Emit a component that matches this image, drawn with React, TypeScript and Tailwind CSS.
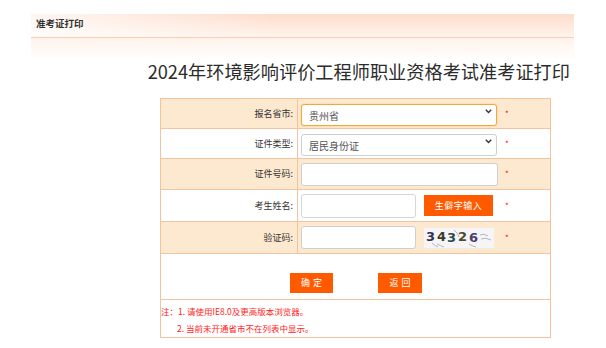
import type { ReactNode } from 'react';

// Row of the form: label on the left, controls and the red star on the right.
function Row({ label, shaded, h, children }: { label: string; shaded?: boolean; h: string; children: ReactNode }) {
  return (
    <div className={`grid grid-cols-[137px_1fr] border-b border-[#f3c3a0] ${h} ${shaded ? 'bg-[#fde8d0]' : 'bg-white'}`}>
      <div className="flex items-center justify-end pr-[4px] border-r border-[#f3c3a0] text-[9px] text-[#333]">
        {label}:
      </div>
      <div className="flex items-center pl-[3px]">
        <div className="flex items-center w-[204px]">{children}</div>
        <span className="text-[8px] leading-none text-[#ff0000]">*</span>
      </div>
    </div>
  );
}

function Select({ value, focused }: { value: string; focused?: boolean }) {
  return (
    <div className="relative">
      <select
        defaultValue={value}
        className={`appearance-none w-[196px] h-[22px] rounded-[3px] bg-white pl-[7px] text-[10px] text-[#555] outline-none border ${
          focused ? 'border-[#eeaa3a] shadow-[0_0_2px_#f7c97a]' : 'border-[#cfcfcf]'
        }`}
      >
        <option>{value}</option>
      </select>
      <svg className="pointer-events-none absolute right-[5px] top-[8px]" width="7" height="5" viewBox="0 0 7 5">
        <path d="M0.8 0.8 L3.5 3.6 L6.2 0.8" fill="none" stroke="#333" strokeWidth="1.4" />
      </svg>
    </div>
  );
}

function Captcha() {
  return (
    <svg width="70" height="20" viewBox="0 0 70 20" className="ml-[8px]">
      <rect width="70" height="20" fill="#f5f5f8" />
      <g fontFamily="'DejaVu Sans', sans-serif" fontWeight="bold" fontSize="13">
        <text x="2" y="13" fill="#34344e">3</text>
        <text x="13" y="13" fill="#3d3a1e">4</text>
        <text x="23" y="14" fill="#2f4b48">3</text>
        <text x="34" y="13" fill="#4d4a2c">2</text>
        <text x="45" y="14" fill="#4c3f6a">6</text>
      </g>
      <g fill="none" stroke="#9a9aa8" strokeWidth="0.7">
        <path d="M8 15 Q11 18 14 19" />
        <path d="M13 16 Q17 18 20 19" />
        <path d="M30 2 Q34 5 35 9" />
        <path d="M56 7 Q60 5 64 8" />
        <path d="M57 11 Q61 9 67 12" />
        <path d="M45 16 Q48 18 52 19" />
      </g>
    </svg>
  );
}

export default function App() {
  return (
    <div className="w-[606px] h-[348px] bg-white pt-[14px] font-[family-name:'Noto_Sans_CJK_SC','Noto_Sans',sans-serif] overflow-hidden">
      <div className="ml-[31px] w-[543px]">
        {/* Header band */}
        <div className="flex items-start h-[24px] border-b border-[#f6cfb6] bg-[linear-gradient(to_right,rgba(255,255,255,0.75),rgba(255,255,255,0)_45%),linear-gradient(to_bottom,#fddccb,#fff4ec)] pl-[5px] pt-[2px] text-[9.5px] font-bold leading-[14px] text-[#333]">
          准考证打印
        </div>
        <div className="bg-[linear-gradient(to_bottom,#fff2ea,#ffffff_22px)] pt-[20px] pr-[4px] text-right text-[18.2px] leading-[26px] text-[#2b2b2b]">
          2024年环境影响评价工程师职业资格考试准考证打印
        </div>
      </div>

      {/* Form table */}
      <div className="ml-[160px] mt-[14px] w-[391px] border border-[#f3c3a0] border-b-0">
        <Row label="报名省市" shaded h="h-[30px]">
          <Select value="贵州省" focused />
        </Row>
        <Row label="证件类型" h="h-[30px]">
          <Select value="居民身份证" />
        </Row>
        <Row label="证件号码" shaded h="h-[31px]">
          <input className="w-[197px] h-[23px] rounded-[3px] border border-[#cfcfcf] bg-white outline-none" />
        </Row>
        <Row label="考生姓名" h="h-[32px]">
          <input className="w-[115px] h-[24px] rounded-[3px] border border-[#d6d6d6] bg-white outline-none" />
          <button className="ml-[8px] w-[69px] h-[21px] bg-[#ff5a00] text-[9px] text-white tracking-[0.5px]">生僻字输入</button>
        </Row>
        <Row label="验证码" shaded h="h-[32px]">
          <input className="w-[115px] h-[23px] rounded-[3px] border border-[#cfcfcf] bg-white outline-none" />
          <Captcha />
        </Row>

        {/* Buttons */}
        <div className="h-[46px] border-b border-[#f3c3a0] flex items-start gap-[45px] pl-[129px] pt-[19px]">
          <button className="w-[43px] h-[20px] bg-[#ff5a00] text-[9px] text-white tracking-[3px] pl-[3px]">确定</button>
          <button className="w-[44px] h-[20px] bg-[#ff5a00] text-[9px] text-white tracking-[3px] pl-[3px]">返回</button>
        </div>

        {/* Notes */}
        <div className="h-[38px] border-b border-[#f3c3a0] pt-[3px] text-[8.5px] leading-[17px] text-[#ff1a1a]">
          <div>注：1. 请使用IE8.0及更高版本浏览器。</div>
          <div className="pl-[16px]">2. 当前未开通省市不在列表中显示。</div>
        </div>
      </div>
    </div>
  );
}
